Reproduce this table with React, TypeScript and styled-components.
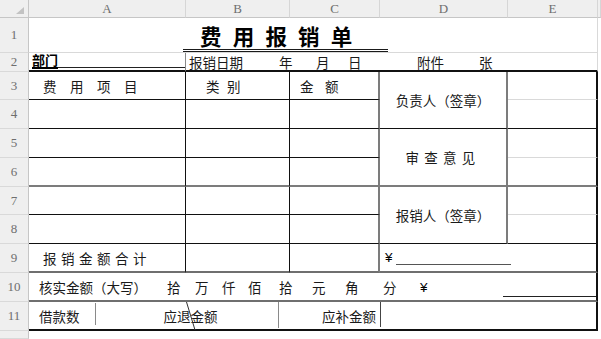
import React from "react";
import styled, { createGlobalStyle } from "styled-components";

const Global = createGlobalStyle`
  html, body { margin: 0; padding: 0; background: #ffffff; }
  body { font-family: "Noto Sans CJK SC", "Noto Sans", sans-serif; }
`;

const BLACK = "#111111";
const DGRAY = "#7c7c7c";
const MGRAY = "#6f6f6f";
const GRID = "#d9d9d9";

const thin = `1px solid ${BLACK}`;
const thick = `2px solid ${BLACK}`;
const grayThick = `2px solid ${DGRAY}`;
const midThick = `2px solid ${MGRAY}`;
const grid = `1px solid ${GRID}`;

const Sheet = styled.div`
  width: 601px;
  height: 339px;
  overflow: hidden;
  display: grid;
  grid-template-columns: 29px 157px 104px 90px 128px 90px 3px;
  grid-template-rows: 18px 35px 19px 28px 29px 29px 29px 28px 29px 29px 29px 29px 1fr;
  font-size: 13.5px;
  line-height: 16px;
  color: #1a1a1a;
  background: #fff;
`;

const HeadBase = styled.div`
  background: #efefef;
  box-sizing: border-box;
  display: flex;
  align-items: center;
  justify-content: center;
  font-family: "Liberation Serif", "DejaVu Serif", serif;
  font-size: 13px;
  color: #6e6e6e;
`;

const Corner = styled(HeadBase)`
  grid-column: 1;
  grid-row: 1;
  position: relative;
  border-right: 1px solid #c6c6c6;
  border-bottom: 1px solid #c6c6c6;
  &::after {
    content: "";
    position: absolute;
    right: 4px;
    bottom: 3px;
    width: 0;
    height: 0;
    border-left: 8px solid transparent;
    border-bottom: 7px solid #c2c2c2;
  }
`;

const ColHead = styled(HeadBase)<{ $c: number }>`
  grid-column: ${(p) => p.$c};
  grid-row: 1;
  border-right: 1px solid #d6d6d6;
  border-bottom: 1px solid #c6c6c6;
`;

const RowHead = styled(HeadBase)<{ $r: number }>`
  grid-column: 1;
  grid-row: ${(p) => p.$r};
  border-right: 1px solid #c6c6c6;
  border-bottom: 1px solid #d9d9d9;
`;

const Cell = styled.div<{
  $c: string;
  $r: string;
  $b?: string;
  $rt?: string;
  $pl?: number;
  $justify?: string;
}>`
  grid-column: ${(p) => p.$c};
  grid-row: ${(p) => p.$r};
  box-sizing: border-box;
  border-bottom: ${(p) => p.$b ?? "none"};
  border-right: ${(p) => p.$rt ?? "none"};
  display: flex;
  align-items: center;
  justify-content: ${(p) => p.$justify ?? "flex-start"};
  padding-left: ${(p) => p.$pl ?? 0}px;
  min-width: 0;
  white-space: nowrap;
  position: relative;
`;

const TitleCell = styled(Cell)`
  align-items: flex-end;
`;

const Title = styled.div`
  margin-left: 154px;
  width: 205px;
  box-sizing: border-box;
  padding-left: 17px;
  font-size: 21.5px;
  font-weight: 700;
  letter-spacing: 11.2px;
  line-height: 26px;
  color: #000;
  border-bottom: 3px double #1a1a1a;
  margin-bottom: 0px;
`;

const DeptCell = styled(Cell)`
  align-items: flex-end;
`;

const DeptLabel = styled.span`
  font-weight: 700;
  font-size: 13px;
  line-height: 15px;
  color: #000;
  border-bottom: 2px solid #000;
  margin-bottom: 1px;
`;

const Fill = styled.span`
  flex: 1;
  border-bottom: 1px solid #222;
  margin-bottom: 2px;
`;

const Item = styled.span<{ $ml?: number }>`
  margin-left: ${(p) => p.$ml ?? 0}px;
`;

const Spaced = styled.span<{ $ls: number }>`
  letter-spacing: ${(p) => p.$ls}px;
`;

const Yen = styled.span`
  font-family: "Liberation Sans", "Noto Sans", sans-serif;
  font-size: 13.5px;
  color: #000;
`;

const Underline = styled.span<{ $w: number; $mb: number; $ml?: number; $color?: string }>`
  width: ${(p) => p.$w}px;
  align-self: flex-end;
  margin-left: ${(p) => (p.$ml === undefined ? "auto" : `${p.$ml}px`)};
  margin-bottom: ${(p) => p.$mb}px;
  border-bottom: 1px solid ${(p) => p.$color ?? "#222"};
`;

const SplitRow = styled(Cell)`
  display: grid;
  grid-template-columns: 67px 183px 102px 1fr;
  align-items: stretch;
`;

const Seg = styled.div<{
  $justify?: string;
  $pl?: number;
  $pr?: number;
  $div?: string;
  $top?: number;
  $bottom?: number;
}>`
  position: relative;
  display: flex;
  align-items: center;
  justify-content: ${(p) => p.$justify ?? "flex-start"};
  padding-left: ${(p) => p.$pl ?? 0}px;
  padding-right: ${(p) => p.$pr ?? 0}px;
  &::after {
    content: "";
    display: ${(p) => (p.$div ? "block" : "none")};
    position: absolute;
    right: 0;
    top: ${(p) => p.$top ?? 0}px;
    bottom: ${(p) => p.$bottom ?? 0}px;
    width: 1px;
    background: ${(p) => p.$div ?? "transparent"};
  }
`;

const Slash = styled.svg`
  position: absolute;
  left: 157px;
  top: 0;
  overflow: visible;
`;

const amountUnits: { t: string; ml: number }[] = [
  { t: "拾", ml: 20 },
  { t: "万", ml: 14.5 },
  { t: "仟", ml: 13.5 },
  { t: "佰", ml: 12.5 },
  { t: "拾", ml: 17.5 },
  { t: "元", ml: 19.5 },
  { t: "角", ml: 19.5 },
  { t: "分", ml: 24.5 },
];

const cols = ["A", "B", "C", "D", "E"];

export default function App() {
  const abcBottoms: Record<number, string> = {
    4: thin,
    5: thin,
    6: thin,
    7: grayThick,
    8: thin,
    9: thin,
  };
  const eBottoms: Record<number, string> = {
    4: grid,
    5: thin,
    6: grid,
    7: grayThick,
    8: grid,
    9: thin,
  };
  const bodyRows = [4, 5, 6, 7, 8, 9];

  return (
    <>
      <Global />
      <Sheet>
        <Corner />
        {cols.map((c, i) => (
          <ColHead key={c} $c={i + 2}>
            {c}
          </ColHead>
        ))}
        <ColHead $c={7} />
        {Array.from({ length: 12 }, (_, i) => (
          <RowHead key={i} $r={i + 2}>
            {i < 11 ? i + 1 : ""}
          </RowHead>
        ))}

        {/* Row 1: title */}
        <TitleCell $c="2 / 7" $r="2" $b={grid} $rt={grid}>
          <Title>费用报销单</Title>
        </TitleCell>

        {/* Row 2 */}
        <DeptCell $c="2" $r="3" $b={thick} $rt="1px solid #8a8a8a" $pl={3}>
          <DeptLabel>部门</DeptLabel>
          <Fill />
        </DeptCell>
        <Cell $c="3 / 7" $r="3" $b={thick} $rt={grid} $pl={3}>
          <Item>报销日期</Item>
          <Item $ml={36}>年</Item>
          <Item $ml={23.5}>月</Item>
          <Item $ml={18.5}>日</Item>
          <Item $ml={55.5}>附件</Item>
          <Item $ml={35}>张</Item>
        </Cell>

        {/* Rows 3-8, columns A-C and E */}
        {bodyRows.map((r) => (
          <React.Fragment key={r}>
            <Cell $c="2" $r={String(r)} $b={abcBottoms[r]} $rt={thin} $pl={14}>
              {r === 4 && <Spaced $ls={13.5}>费用项目</Spaced>}
            </Cell>
            <Cell $c="3" $r={String(r)} $b={abcBottoms[r]} $rt={thin} $pl={20}>
              {r === 4 && <Spaced $ls={7.5}>类别</Spaced>}
            </Cell>
            <Cell $c="4" $r={String(r)} $b={abcBottoms[r]} $rt={grayThick} $pl={10}>
              {r === 4 && <Spaced $ls={11.5}>金额</Spaced>}
            </Cell>
            <Cell $c="6" $r={String(r)} $b={eBottoms[r]} $rt={thick} />
          </React.Fragment>
        ))}

        {/* Column D merged blocks */}
        <Cell $c="5" $r="4 / 6" $b={thin} $rt={grayThick} $justify="center">
          负责人（签章）
        </Cell>
        <Cell $c="5" $r="6 / 8" $b={grayThick} $rt={grayThick} $justify="center">
          <Spaced $ls={5.3}>审查意见</Spaced>
        </Cell>
        <Cell $c="5" $r="8 / 10" $b={thin} $rt={grayThick} $justify="center">
          报销人（签章）
        </Cell>

        {/* Row 9 */}
        <Cell $c="2" $r="10" $b={midThick} $rt={thin} $pl={14}>
          <Spaced $ls={4.5}>报销金额合计</Spaced>
        </Cell>
        <Cell $c="3" $r="10" $b={midThick} $rt={thin} />
        <Cell $c="4" $r="10" $b={midThick} $rt={grayThick} />
        <Cell $c="5 / 7" $r="10" $b={midThick} $rt={thick} $pl={5}>
          <Yen>¥</Yen>
          <Underline $w={115} $mb={6} $ml={3} $color="#555" />
        </Cell>

        {/* Row 10 */}
        <Cell $c="2 / 7" $r="11" $b={midThick} $rt={thick} $pl={10}>
          <Item>核实金额（大写）</Item>
          {amountUnits.map((u, i) => (
            <Item key={i} $ml={u.ml}>
              {u.t}
            </Item>
          ))}
          <Item $ml={23.5}>
            <Yen>¥</Yen>
          </Item>
          <Underline $w={93} $mb={3} />
        </Cell>

        {/* Row 11 */}
        <SplitRow $c="2 / 7" $r="12" $b={thick} $rt={thick}>
          <Seg $pl={10} $div="#8a8a8a" $top={1} $bottom={4}>
            借款数
          </Seg>
          <Seg $justify="center" $pl={6} $div="#8a8a8a" $top={0} $bottom={1}>
            应退金额
          </Seg>
          <Seg $justify="flex-end" $pr={5} $div="#444" $top={0} $bottom={2}>
            应补金额
          </Seg>
          <Seg />
          <Slash width="10" height="28" viewBox="0 0 10 28">
            <line x1="0.5" y1="0" x2="9" y2="28" stroke="#333" strokeWidth="1" />
          </Slash>
        </SplitRow>
      </Sheet>
    </>
  );
}
